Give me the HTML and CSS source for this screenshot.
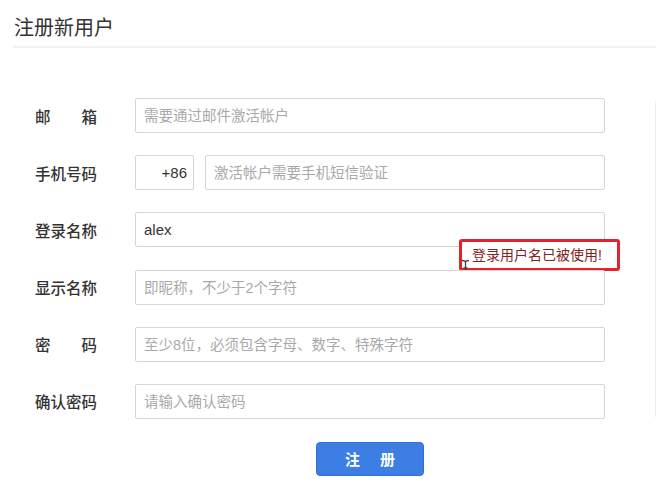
FILE: index.html
```html
<!DOCTYPE html>
<html lang="zh-CN">
<head>
    <meta charset="UTF-8">
    <meta name="viewport" content="width=device-width, initial-scale=1.0">
    <title>注册新用户</title>
    <link rel="stylesheet" href="styles.css">
</head>
<body>
    <div class="page-head">
        <h1>注册新用户</h1>
    </div>

    <div class="main">
        <form class="reg-form">
            <div class="row">
                <label class="label spread"><span>邮</span><span>箱</span></label>
                <input class="field" type="text" placeholder="需要通过邮件激活帐户">
            </div>
            <div class="row">
                <label class="label">手机号码</label>
                <input class="field code" type="text" value="+86">
                <input class="field phone" type="text" placeholder="激活帐户需要手机短信验证">
            </div>
            <div class="row">
                <label class="label">登录名称</label>
                <input class="field" type="text" value="alex">
                <div class="error-tip">登录用户名已被使用!</div>
                <svg class="ibeam" width="9" height="18" viewBox="0 0 9 18">
                    <path d="M1 1.5c2 0 3.5 .5 3.5 2v11c0 1.5 1.5 2 3.5 2M8 1.5c-2 0-3.5 .5-3.5 2M1 16.5c2 0 3.5-.5 3.5-2M2.5 9h4" stroke="#444" stroke-width="1.3" fill="none"/>
                </svg>
            </div>
            <div class="row">
                <label class="label">显示名称</label>
                <input class="field" type="text" placeholder="即昵称，不少于2个字符">
            </div>
            <div class="row">
                <label class="label spread"><span>密</span><span>码</span></label>
                <input class="field" type="password" placeholder="至少8位，必须包含字母、数字、特殊字符">
            </div>
            <div class="row">
                <label class="label">确认密码</label>
                <input class="field" type="password" placeholder="请输入确认密码">
            </div>
            <div class="row actions">
                <button type="button" class="btn-submit">注 册</button>
            </div>
        </form>
        <div class="side"></div>
    </div>
</body>
</html>
```

FILE: styles.css
```css
body {
    margin: 0;
    font-family: "Liberation Sans", "Noto Sans CJK SC", sans-serif;
    color: #333;
    background: #fff;
}

.page-head {
    margin: 0 0 0 13px;
    height: 46px;
    border-bottom: 2px solid #f2f2f2;
}

.page-head h1 {
    margin: 0;
    padding-top: 15px;
    padding-left: 1px;
    font-size: 20px;
    font-weight: normal;
    line-height: 26px;
    color: #333;
}

.main {
    display: flex;
}

.reg-form {
    position: relative;
    width: 655px;
    padding-top: 50px;
    padding-left: 35px;
    box-sizing: border-box;
}

.row {
    position: relative;
    display: flex;
    align-items: center;
    height: 35px;
    margin-bottom: 22.2px;
}

.label {
    width: 62px;
    margin-right: 38px;
    font-size: 15.5px;
    font-weight: 500;
    color: #333;
}

.label.spread {
    display: flex;
    justify-content: space-between;
}

.field {
    width: 470px;
    height: 35px;
    box-sizing: border-box;
    border: 1px solid #d6d6d6;
    border-radius: 2px;
    padding: 0 8px;
    font-family: inherit;
    font-size: 15px;
    color: #333;
    outline: none;
}

.field::placeholder {
    color: #a9a9a9;
    font-size: 14.5px;
}

.field.code {
    width: 59px;
    text-align: right;
    padding-right: 6px;
}

.field.phone {
    width: 400px;
    margin-left: 11px;
}

.error-tip {
    position: absolute;
    left: 424px;
    top: 27px;
    width: 161px;
    height: 32px;
    box-sizing: border-box;
    border: 3px solid #e3232b;
    border-radius: 3px;
    background: #fff;
    padding-left: 10px;
    font-size: 14px;
    line-height: 26px;
    color: #7e2424;
}

.ibeam {
    position: absolute;
    left: 426px;
    top: 47px;
}

.actions {
    padding-left: 100px;
    justify-content: center;
    width: 470px;
}

.btn-submit {
    width: 108px;
    height: 34px;
    padding: 0;
    border: 1px solid #2f6fd6;
    border-radius: 4px;
    background: #3c7ee3;
    color: #fff;
    font-family: inherit;
    font-size: 15px;
    font-weight: bold;
    letter-spacing: 8px;
    text-indent: 8px;
    white-space: nowrap;
    cursor: pointer;
}

.side {
    margin-top: 53px;
    height: 316px;
    border-left: 1px solid #ececec;
}
```
